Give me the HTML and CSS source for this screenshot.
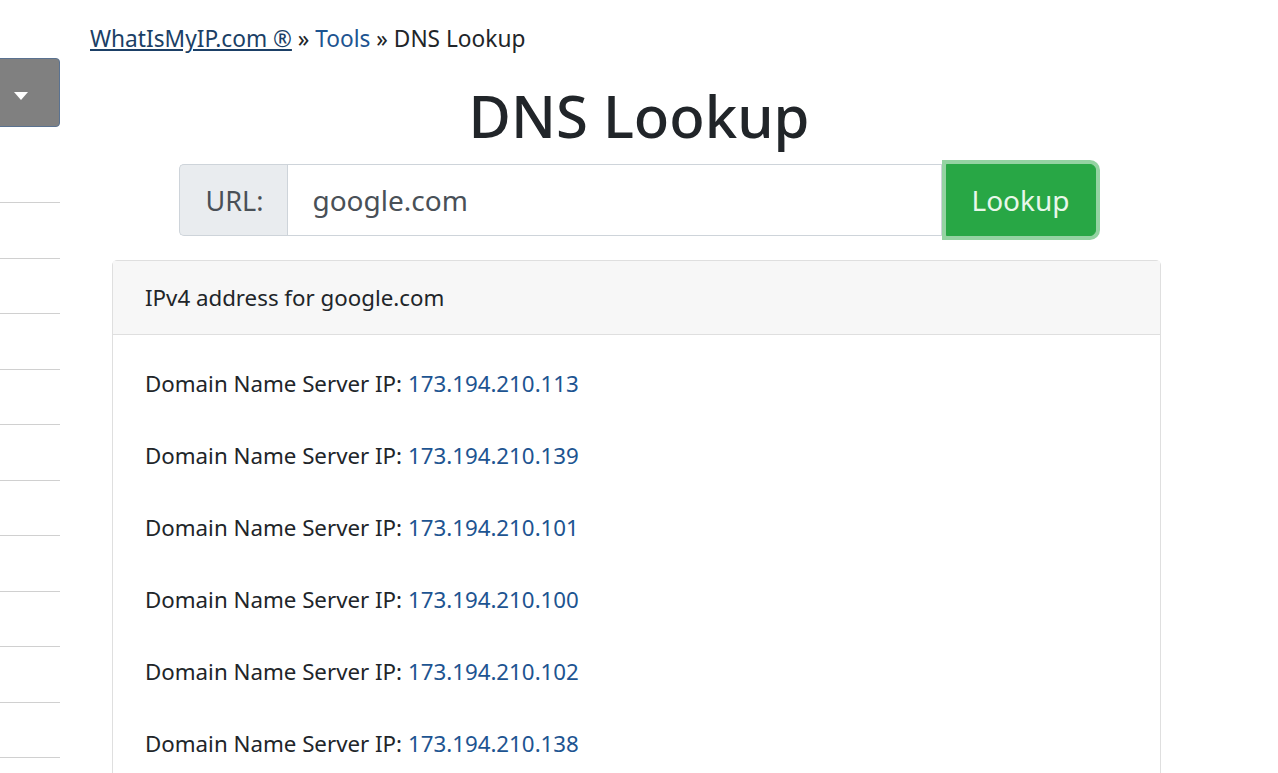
FILE: index.html
```html
<!DOCTYPE html>
<html lang="en">
<head>
    <meta charset="UTF-8">
    <title>DNS Lookup - WhatIsMyIP.com</title>
    <link rel="stylesheet" href="styles.css">
</head>
<body>

<!-- Menu lateral -->
<nav class="side-nav">
    <button class="side-toggle" aria-label="Menu">
        <svg width="16" height="10" viewBox="0 0 16 10"><path d="M1 1 L15 1 L8 9 Z" fill="#fff"/></svg>
    </button>
    <ul class="side-list">
        <li></li><li></li><li></li><li></li><li></li><li></li>
        <li></li><li></li><li></li><li></li><li></li>
    </ul>
</nav>

<main class="page">
    <div class="breadcrumb">
        <a href="#" class="crumb-home">WhatIsMyIP.com ®</a> » <a href="#" class="crumb">Tools</a> » DNS Lookup
    </div>

    <h1>DNS Lookup</h1>

    <form class="lookup-form" onsubmit="return false;">
        <span class="lookup-label">URL:</span>
        <input type="text" class="lookup-input" value="google.com">
        <button class="lookup-btn">Lookup</button>
    </form>

    <div class="card">
        <div class="card-header">IPv4 address for google.com</div>
        <div class="card-body">
            <p>Domain Name Server IP: <a href="#">173.194.210.113</a></p>
            <p>Domain Name Server IP: <a href="#">173.194.210.139</a></p>
            <p>Domain Name Server IP: <a href="#">173.194.210.101</a></p>
            <p>Domain Name Server IP: <a href="#">173.194.210.100</a></p>
            <p>Domain Name Server IP: <a href="#">173.194.210.102</a></p>
            <p>Domain Name Server IP: <a href="#">173.194.210.138</a></p>
        </div>
    </div>
</main>

</body>
</html>
```

FILE: styles.css
```css
html, body {
    margin: 0;
    padding: 0;
    background: #ffffff;
    color: #212529;
    font-family: 'Noto Sans', 'Open Sans', Arial, sans-serif;
    overflow: hidden;
}

a { color: #1d5491; text-decoration: none; }

/* Menu lateral */
.side-nav {
    position: fixed;
    top: 0;
    left: 0;
    width: 60px;
    height: 100%;
}
.side-toggle {
    display: flex;
    align-items: center;
    justify-content: center;
    margin-top: 58px;
    margin-left: -18px;
    width: 78px;
    height: 69px;
    background: #808080;
    border: 1px solid #5a7290;
    border-radius: 4px;
    padding: 6px 0 0 0;
}
.side-list {
    list-style: none;
    margin: 75px 0 0 0;
    padding: 0;
}
.side-list li {
    height: 54.5px;
    border-top: 1px solid #d0d0d0;
}

.page {
    padding: 22px 90px 0 90px;
}

.breadcrumb {
    font-size: 22.7px;
    line-height: 34px;
    color: #212529;
}
.crumb-home { color: #1b3f66; text-decoration: underline; }

h1 {
    font-size: 58px;
    font-weight: 500;
    text-align: center;
    margin: 22px 0 10px 0;
    line-height: 76px;
}

.lookup-form {
    display: flex;
    width: 921px;
    height: 72px;
    margin: 0 auto 24px auto;
}
.lookup-label {
    display: flex;
    align-items: center;
    padding: 0 24px 0 26px;
    background: #e9ecef;
    border: 1px solid #ced4da;
    border-right: none;
    border-radius: 5px 0 0 5px;
    font-size: 27px;
    color: #495057;
}
.lookup-input {
    flex: 1;
    border: 1px solid #ced4da;
    padding: 0 24px;
    font-family: inherit;
    font-size: 28px;
    color: #495057;
    outline: none;
}
.lookup-btn {
    width: 150px;
    margin: 0 4px 0 4px;
    background: #28a745;
    color: #e8f7ea;
    border: 1px solid #28a745;
    border-radius: 0 6px 6px 0;
    box-shadow: 0 0 0 4px #94d3a2;
    font-family: inherit;
    font-size: 28px;
}

.card {
    margin: 0 27px 0 22px;
    border: 1px solid #dfdfdf;
    border-radius: 5px;
}
.card-header {
    background: #f7f7f7;
    border-bottom: 1px solid #dfdfdf;
    padding: 0 32px;
    height: 73px;
    display: flex;
    align-items: center;
    font-size: 22.3px;
}
.card-body {
    padding: 13px 32px;
}
.card-body p {
    margin: 0;
    font-size: 22.3px;
    line-height: 72px;
}
```
